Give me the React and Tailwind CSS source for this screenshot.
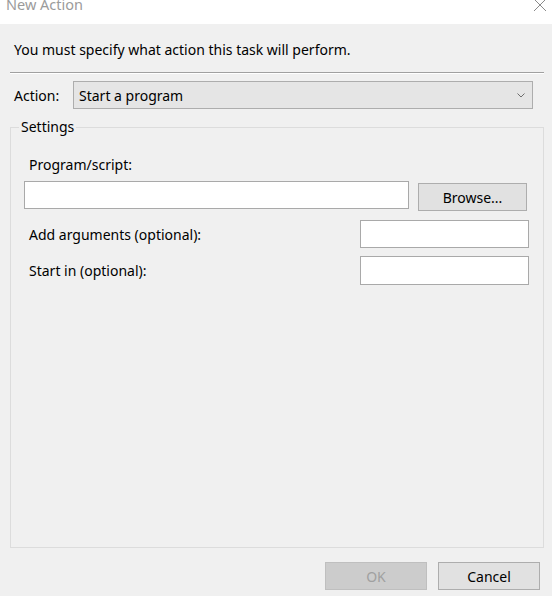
import React from 'react';

const FONT = { fontFamily: '"Noto Sans", "Open Sans", sans-serif' };

function Chevron() {
  return (
    <svg width="8" height="5" viewBox="0 0 8 5" className="text-[#6d6d6d]">
      <polyline points="0.5,0.5 4,4 7.5,0.5" fill="none" stroke="currentColor" strokeWidth="1" />
    </svg>
  );
}

function CloseIcon() {
  return (
    <svg width="14" height="14" viewBox="0 0 14 14" className="text-[#8a8a8a]">
      <path d="M1 1 L13 13 M13 1 L1 13" stroke="currentColor" strokeWidth="1" fill="none" />
    </svg>
  );
}

export default function App() {
  return (
    <div
      className="w-[552px] h-[596px] flex flex-col bg-[#f0f0f0] text-black text-[14px] overflow-hidden"
      style={FONT}
    >
      {/* title bar, cut at the top */}
      <div className="h-[24px] shrink-0 bg-white flex items-start justify-between overflow-hidden">
        <span className="ml-[6px] -mt-[6px] text-[14.5px] leading-[20px] text-[#9b9b9b]">New Action</span>
        <div className="mr-[5px] -mt-[2px]">
          <CloseIcon />
        </div>
      </div>

      <div className="flex-1 flex flex-col pl-[10px] pr-[8px]">
        <p className="mt-[17px] ml-[4px] leading-[18px]">
          You must specify what action this task will perform.
        </p>

        <div className="mt-[13px] border-t border-b border-t-[#a0a0a0] border-b-white" />

        <div className="mt-[7px] flex items-center">
          <span className="ml-[4px] w-[59px]">Action:</span>
          <div className="w-[460px] h-[28px] bg-[#e5e5e5] border border-[#adadad] flex items-center justify-between pl-[5px] pr-[7px]">
            <span>Start a program</span>
            <Chevron />
          </div>
        </div>

        <fieldset className="mt-[9px] flex-1 border border-[#dcdcdc] pl-[13px] pr-[14px] pt-[20px]">
          <legend className="-ml-[5px] px-[2px] leading-[18px]">Settings</legend>

          <div className="ml-[5px] leading-[18px]">Program/script:</div>
          <div className="mt-[7px] flex items-start">
            <div className="w-[385px] h-[28px] bg-white border border-[#a9a9a9]" />
            <button className="ml-[9px] mt-[2px] w-[109px] h-[28px] bg-[#e1e1e1] border border-[#adadad]">
              Browse...
            </button>
          </div>

          <div className="mt-[9px] flex items-center justify-between">
            <span className="ml-[5px]">Add arguments (optional):</span>
            <div className="w-[169px] h-[28px] bg-white border border-[#a9a9a9]" />
          </div>
          <div className="mt-[8px] flex items-center justify-between">
            <span className="ml-[5px]">Start in (optional):</span>
            <div className="w-[169px] h-[29px] bg-white border border-[#a9a9a9]" />
          </div>
        </fieldset>

        <div className="mt-[14px] mb-[6px] flex justify-end gap-[11px] pr-[4px]">
          <button className="w-[102px] h-[28px] bg-[#cccccc] border border-[#bfbfbf] text-[#a0a0a0]">OK</button>
          <button className="w-[102px] h-[28px] bg-[#e1e1e1] border border-[#adadad]">Cancel</button>
        </div>
      </div>
    </div>
  );
}
